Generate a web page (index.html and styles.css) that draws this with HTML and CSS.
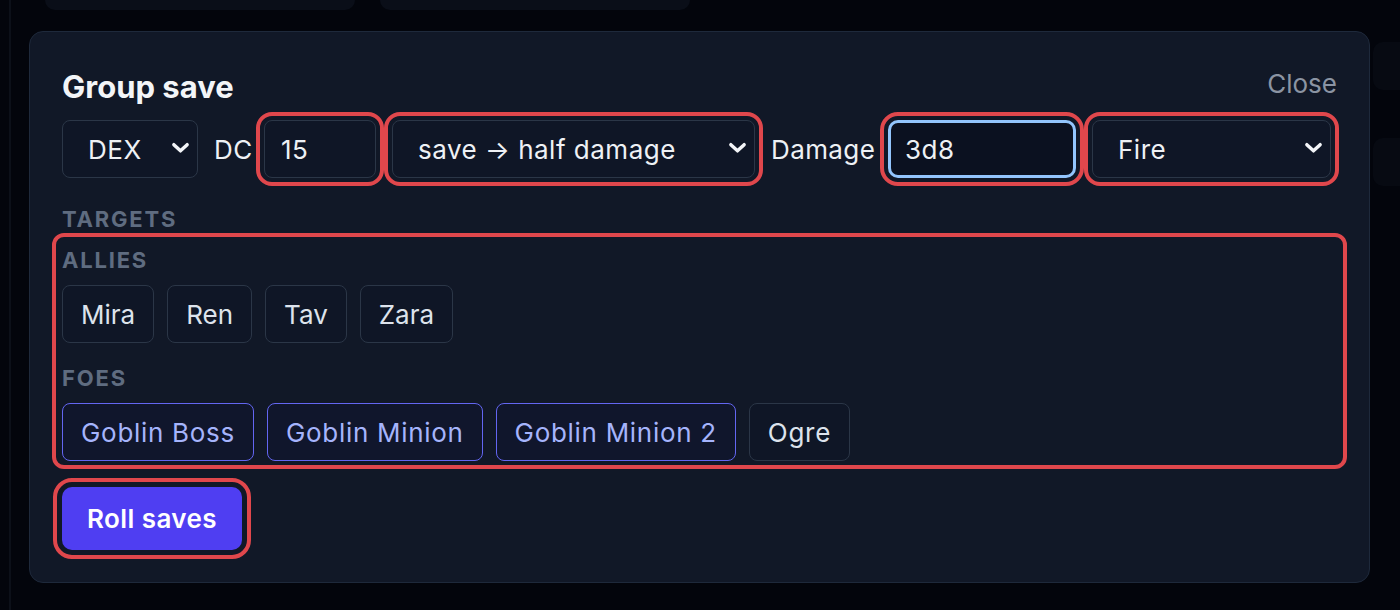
FILE: index.html
```html
<!DOCTYPE html>
<html lang="en">
<head>
    <meta charset="UTF-8">
    <meta name="viewport" content="width=device-width, initial-scale=1.0">
    <title>Group save</title>
    <link rel="stylesheet" href="styles.css">
</head>
<body>
    <div class="backdrop">
        <div class="top-cards">
            <div class="ghost-card"></div>
            <div class="ghost-card"></div>
        </div>
        <div class="side-cards">
            <div class="ghost-side"></div>
            <div class="ghost-side"></div>
        </div>
    </div>

    <section class="dialog">
        <div class="dialog-head">
            <h2>Group save</h2>
            <button class="close-btn">Close</button>
        </div>

        <div class="save-row">
            <span class="select-wrap ability">
                <select>
                    <option>DEX</option>
                </select>
                <svg class="chevron" viewBox="0 0 20 12"><path d="M3 2.5 L10 9 L17 2.5" /></svg>
            </span>
            <span class="field-label dc-label">DC</span>
            <input class="field dc hl" type="text" value="15">
            <span class="select-wrap effect hl">
                <select>
                    <option>save → half damage</option>
                </select>
                <svg class="chevron" viewBox="0 0 20 12"><path d="M3 2.5 L10 9 L17 2.5" /></svg>
            </span>
            <span class="field-label dmg-label">Damage</span>
            <input class="field dice focused hl" type="text" value="3d8">
            <span class="select-wrap dmg-type hl">
                <select>
                    <option>Fire</option>
                </select>
                <svg class="chevron" viewBox="0 0 20 12"><path d="M3 2.5 L10 9 L17 2.5" /></svg>
            </span>
        </div>

        <div class="section-label">Targets</div>
        <div class="targets hl">
            <div class="target-group">
                <div class="group-label">Allies</div>
                <div class="chips allies">
                    <button class="chip">Mira</button>
                    <button class="chip">Ren</button>
                    <button class="chip">Tav</button>
                    <button class="chip">Zara</button>
                </div>
            </div>
            <div class="target-group">
                <div class="group-label">Foes</div>
                <div class="chips">
                    <button class="chip selected">Goblin Boss</button>
                    <button class="chip selected">Goblin Minion</button>
                    <button class="chip selected">Goblin Minion 2</button>
                    <button class="chip">Ogre</button>
                </div>
            </div>
        </div>

        <button class="roll-btn hl">Roll saves</button>
    </section>
</body>
</html>
```

FILE: styles.css
```css
body {
    margin: 0;
    height: 610px;
    overflow: hidden;
    background: #03050c;
    font-family: Inter, "Noto Sans", sans-serif;
    color: #e5e9f0;
}

.backdrop {
    display: flow-root;
    margin-left: 9px;
    height: 610px;
    border-left: 2px solid #0c1019;
    box-sizing: border-box;
}

.top-cards {
    display: flex;
    gap: 25px;
    padding-left: 34px;
    margin-top: -50px;
}

.ghost-card {
    width: 310px;
    height: 60px;
    background: #0a0e18;
    border-radius: 10px;
}

.side-cards {
    display: flex;
    flex-direction: column;
    gap: 48px;
    margin: 32px 0 0 1362px;
}

.ghost-side {
    width: 60px;
    height: 48px;
    background: #070a12;
    border-radius: 10px;
}

/* dialog sits over the page */
.dialog {
    position: absolute;
    top: 31px;
    left: 29px;
    width: 1341px;
    box-sizing: border-box;
    padding: 32px;
    background: #111827;
    border: 1px solid #1e293b;
    border-radius: 14px;
}

.dialog-head {
    display: flex;
    justify-content: space-between;
    align-items: flex-start;
    margin-top: 5px;
    height: 36px;
}

.dialog-head h2 {
    margin: 0;
    font-size: 31px;
    line-height: 36px;
    font-weight: 700;
    color: #f3f5f8;
}

.close-btn {
    background: none;
    border: none;
    padding: 0;
    margin-top: -1px;
    font-family: inherit;
    font-size: 26px;
    line-height: 32px;
    color: #8b94a3;
    cursor: pointer;
}

.save-row {
    display: flex;
    align-items: center;
    gap: 16px;
    margin-top: 15px;
    height: 58px;
}

.field-label {
    font-size: 26px;
    letter-spacing: 0.4px;
    color: #eef1f5;
    white-space: nowrap;
}

.dc-label { width: 34px; }
.dmg-label { width: 101px; }

.hl {
    outline: 4px solid #e0474c;
    outline-offset: 4px;
}

.select-wrap {
    position: relative;
    display: block;
    flex: none;
    height: 58px;
    border-radius: 8px;
}

.select-wrap select {
    appearance: none;
    width: 100%;
    height: 58px;
    padding: 0 40px 0 25px;
    background: #0f1626;
    border: 1px solid #2b3647;
    border-radius: 8px;
    font-family: inherit;
    font-size: 26px;
    letter-spacing: 0.5px;
    color: #eef1f5;
}

.chevron {
    position: absolute;
    right: 8px;
    top: 22px;
    width: 19px;
    height: 12px;
    pointer-events: none;
}

.chevron path {
    fill: none;
    stroke: #f3f5f8;
    stroke-width: 3.6;
    stroke-linecap: round;
    stroke-linejoin: round;
}

.ability { width: 136px; }
.effect { width: 363px; }
.dmg-type { width: 239px; }

.field {
    flex: none;
    box-sizing: border-box;
    height: 58px;
    padding: 0 16px;
    background: #0f1626;
    border: 1px solid #2b3647;
    border-radius: 8px;
    font-family: inherit;
    font-size: 26px;
    letter-spacing: 0.5px;
    color: #eef1f5;
}

.dc { width: 112px; }

.dice { width: 188px; }

.focused {
    border: 3px solid #93c5fd;
    border-radius: 10px;
    padding-left: 14px;
    background: #0b1120;
}

.section-label,
.group-label {
    font-size: 22px;
    line-height: 28px;
    font-weight: 700;
    letter-spacing: 1.8px;
    text-transform: uppercase;
    color: #5f6c80;
}

.section-label {
    margin-top: 27px;
}

.targets {
    margin: 8px -2px 0;
    padding: 5px 2px 0;
    border-radius: 4px;
    display: flex;
    flex-direction: column;
    gap: 21px;
}

.target-group {
    display: flex;
    flex-direction: column;
    gap: 11px;
}

.chips {
    display: flex;
    gap: 13px;
}

.chip {
    height: 58px;
    padding: 0 18px;
    background: #0f1626;
    border: 1px solid #2b3647;
    border-radius: 8px;
    font-family: inherit;
    font-size: 26px;
    letter-spacing: 0.7px;
    color: #dde3ec;
    cursor: pointer;
}

.allies .chip {
    letter-spacing: 0;
}

.chip.selected {
    border-color: #6366f1;
    color: #a5b4fc;
    background: #10162c;
}

.roll-btn {
    display: block;
    margin-top: 26px;
    width: 180px;
    height: 63px;
    background: #4f3ef2;
    border: none;
    border-radius: 10px;
    font-family: inherit;
    font-size: 26px;
    font-weight: 600;
    letter-spacing: 0.4px;
    color: #ffffff;
    outline-offset: 5px;
    cursor: pointer;
}

.targets.hl {
    outline-offset: 4px;
}
```
